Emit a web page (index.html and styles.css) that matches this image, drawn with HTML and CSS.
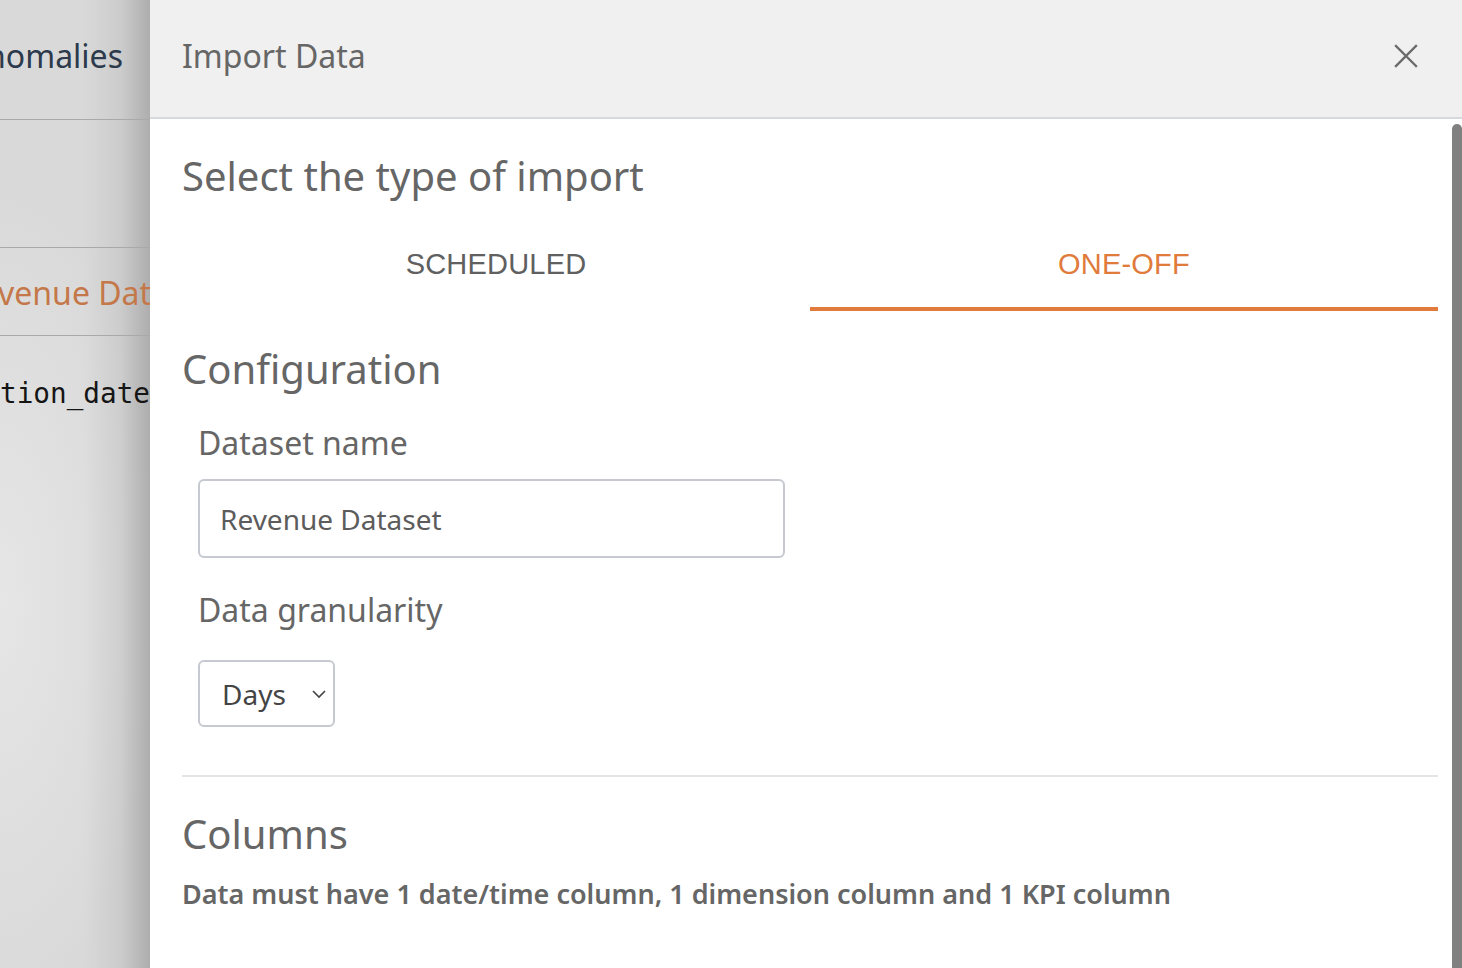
FILE: index.html
```html
<!DOCTYPE html>
<html lang="en">
<head>
<meta charset="utf-8">
<title>Import Data</title>
<link rel="stylesheet" href="styles.css">
</head>
<body>
<div class="app">
  <aside class="backdrop">
    <div class="bd-head"><span class="bd-title">Anomalies</span></div>
    <div class="bd-row bd-empty"></div>
    <div class="bd-row bd-link"><span>Revenue Dataset</span></div>
    <div class="bd-code"><span>creation_date</span></div>
  </aside>
  <section class="panel">
    <header class="panel-head">
      <h1 class="panel-title">Import Data</h1>
      <button class="close" aria-label="Close">
        <svg width="24" height="24" viewBox="0 0 24 24"><path d="M2 2L22 22M22 2L2 22" stroke="#6b6b6b" stroke-width="2.4" stroke-linecap="square" fill="none"/></svg>
      </button>
    </header>
    <div class="panel-body">
      <div class="content">
        <h2 class="h-import">Select the type of import</h2>
        <div class="tabs">
          <div class="tab">SCHEDULED</div>
          <div class="tab active">ONE-OFF</div>
        </div>
        <h2 class="h-section">Configuration</h2>
        <div class="field">
          <label class="label">Dataset name</label>
          <div class="input">Revenue Dataset</div>
          <label class="label label-gap">Data granularity</label>
          <div class="select">
            <span>Days</span>
            <svg width="16" height="10" viewBox="0 0 16 10"><path d="M2 2L8 8L14 2" stroke="#444" stroke-width="1.6" fill="none"/></svg>
          </div>
        </div>
        <hr class="divider">
        <h2 class="h-section h-columns">Columns</h2>
        <p class="desc">Data must have 1 date/time column, 1 dimension column and 1 KPI column</p>
      </div>
      <div class="scroll-thumb"></div>
    </div>
  </section>
</div>
</body>
</html>
```

FILE: styles.css
```css
* { box-sizing: border-box; }
html, body { margin: 0; padding: 0; height: 100%; }
body {
  font-family: "Noto Sans", "Open Sans", sans-serif;
  background: #fff;
  overflow: hidden;
}
.app {
  display: flex;
  height: 968px;
  width: 1462px;
}

/* dimmed page behind */
.backdrop {
  width: 150px;
  flex: none;
  overflow: hidden;
  display: flex;
  flex-direction: column;
  background:
    linear-gradient(to right, rgba(0,0,0,0) 55%, rgba(0,0,0,0.06) 80%, rgba(0,0,0,0.2) 100%),
    radial-gradient(ellipse 160px 420px at 0 600px, #e6e6e6 0%, #d9d9d9 100%);
  background-color: #d8d8d8;
}
.bd-head {
  width: 100%;
  height: 120px;
  border-bottom: 1px solid #a9a9a9;
  display: flex;
  align-items: center;
  justify-content: flex-end;
  padding-right: 27px;
  padding-bottom: 8px;
}
.bd-title {
  font-size: 32px;
  color: #2c3a4b;
  white-space: nowrap;
  flex: none;
}
.bd-row {
  width: 100%;
  border-bottom: 1px solid #a9a9a9;
}
.bd-empty { height: 128px; }
.bd-link {
  height: 88px;
  display: flex;
  align-items: center;
  justify-content: flex-end;
  padding-top: 2px;
}
.bd-link span {
  font-size: 32px;
  color: #c4784a;
  white-space: nowrap;
  flex: none;
  margin-right: -64px;
}
.bd-code {
  width: 100%;
  display: flex;
  justify-content: flex-end;
  margin-top: 41px;
}
.bd-code span {
  flex: none;
  font-family: "DejaVu Sans Mono", monospace;
  font-size: 27.7px;
  color: #151515;
  white-space: nowrap;
}

/* panel */
.panel {
  flex: 1;
  display: flex;
  flex-direction: column;
  min-width: 0;
}
.panel-head {
  height: 119px;
  flex: none;
  background: #f0f0f0;
  border-bottom: 2px solid #d6d9dd;
  display: flex;
  align-items: center;
  justify-content: space-between;
  padding: 0 44px 6px 32px;
}
.panel-title {
  margin: 0;
  font-weight: 400;
  font-size: 32px;
  color: #666;
}
.close {
  border: 0;
  background: none;
  padding: 0;
  width: 24px;
  height: 24px;
  display: flex;
  cursor: pointer;
}
.panel-body {
  flex: 1;
  position: relative;
  overflow: hidden;
  background: #fff;
}
.content {
  padding: 33px 24px 0 32px;
  color: #666;
}
.scroll-thumb {
  position: absolute;
  right: 0;
  top: 5px;
  width: 10px;
  height: 1000px;
  background: #808080;
  border-radius: 6px;
}
.h-import {
  margin: 0;
  font-weight: 400;
  font-size: 40px;
  line-height: 48px;
  color: #666;
}
.tabs {
  display: flex;
  margin-top: 31px;
}
.tab {
  flex: 1;
  text-align: center;
  font-family: "Liberation Sans", Arial, sans-serif;
  font-size: 29px;
  letter-spacing: 0.2px;
  color: #606060;
  height: 80px;
  line-height: 40px;
  padding-top: 13px;
  border-bottom: 4px solid transparent;
}
.tab.active {
  color: #e07b3c;
  border-bottom-color: #e07b3c;
}
.h-section {
  margin: 34px 0 0;
  font-weight: 400;
  font-size: 40px;
  line-height: 48px;
  color: #666;
}
.field {
  padding-left: 16px;
}
.label {
  display: block;
  margin-top: 30px;
  font-size: 32px;
  line-height: 40px;
  color: #666;
}
.label-gap { margin-top: 32px; }
.input {
  margin-top: 16px;
  width: 587px;
  height: 79px;
  border: 2px solid #c6c9cf;
  border-radius: 6px;
  padding: 0 20px;
  display: flex;
  align-items: center;
  font-size: 28px;
  color: #5c5c5c;
}
.select {
  margin-top: 30px;
  width: 137px;
  height: 67px;
  border: 2px solid #c6c9cf;
  border-radius: 6px;
  padding: 0 6px 0 22px;
  display: flex;
  align-items: center;
  justify-content: space-between;
  font-size: 28px;
  color: #444;
}
.divider {
  margin: 48px 0 0;
  border: 0;
  border-top: 2px solid #e5e5e5;
}
.h-columns { margin-top: 33px; }
.desc {
  margin: 18px 0 0;
  font-size: 27px;
  line-height: 36px;
  font-weight: 600;
  color: #666;
  letter-spacing: 0;
}
```
